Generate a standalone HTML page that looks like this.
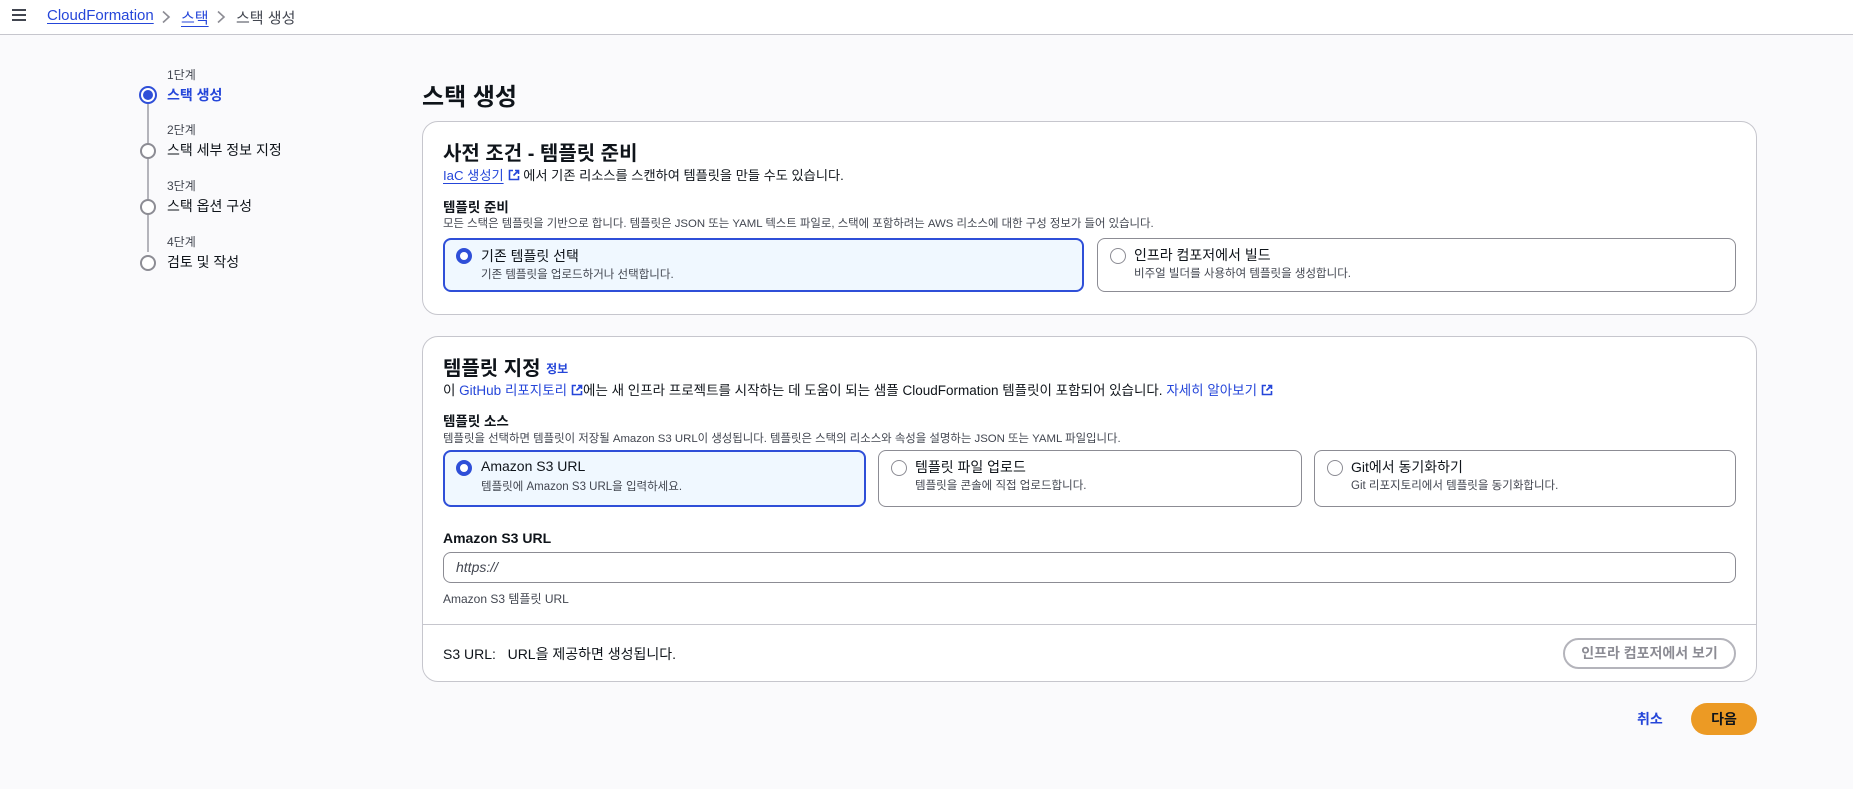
<!DOCTYPE html>
<html><head><meta charset="utf-8"><style>
*{box-sizing:border-box;margin:0;padding:0}
body{width:1853px;height:789px;background:#fafafc;font-family:"Liberation Sans","Noto Sans CJK KR",sans-serif;color:#0f141a;position:relative;overflow:hidden}
.a{position:absolute;white-space:nowrap}
.hdr{position:absolute;left:0;top:0;width:1853px;height:35px;background:#fff;border-bottom:1px solid #c6c6cd}
.blue{color:#2546d9}
.ul{text-decoration:underline;text-underline-offset:3px}
.step-s{font-size:12px;color:#424650}
.step-l{font-size:14px;color:#0f141a}
.circ{position:absolute;width:16px;height:16px;border:2px solid #8c8c94;border-radius:50%;background:#fff}
.panel{position:absolute;left:422px;width:1335px;background:#fff;border:1px solid #c6c6cd;border-radius:16px}
.card{position:absolute;border:1px solid #8c8c94;border-radius:8px;background:#fff}
.card.sel{border:2px solid #2f4fd8;background:#f0f8ff}
.rad{position:absolute;left:12px;top:9px;width:16px;height:16px;border-radius:50%;border:1.5px solid #8c8c94;background:#fff}
.sel .rad{border:4px solid #2f4fd8;left:11px;top:8px}
.ct{position:absolute;left:36px;top:6px;font-size:14px}
.cd{position:absolute;left:36px;top:26px;font-size:11.5px;color:#424650}
.ext{display:inline-block;width:12px;height:12px;vertical-align:-1px;margin-left:4px}
</style></head><body>
<div class="hdr"></div>
<div class="a" style="left:12px;top:9px;width:14px;height:2px;background:#424650;box-shadow:0 5px 0 #424650,0 10px 0 #424650"></div>
<div class="a blue ul" style="left:47px;top:7px;font-size:15px">CloudFormation</div>
<svg class="a" style="left:161px;top:10px" width="10" height="14" viewBox="0 0 10 14"><path d="M2 1.5l6 5.5-6 5.5" fill="none" stroke="#8c8c94" stroke-width="1.6"/></svg>
<div class="a blue ul" style="left:181px;top:7px;font-size:15px">스택</div>
<svg class="a" style="left:216px;top:10px" width="10" height="14" viewBox="0 0 10 14"><path d="M2 1.5l6 5.5-6 5.5" fill="none" stroke="#8c8c94" stroke-width="1.6"/></svg>
<div class="a" style="left:236px;top:7px;font-size:15px;color:#424650">스택 생성</div>

<div class="a" style="left:147px;top:104px;width:2px;height:148px;background:#b4b4bb"></div>
<div class="a step-s" style="left:167px;top:66px">1단계</div>
<div class="circ" style="left:139px;top:86px;width:18px;height:18px;border-color:#2f4fd8;background:#fff"></div>
<div class="a" style="left:143px;top:90px;width:10px;height:10px;border-radius:50%;background:#2f4fd8"></div>
<div class="a step-l" style="left:167px;top:85px;color:#2546d9;font-weight:bold">스택 생성</div>
<div class="a step-s" style="left:167px;top:121px">2단계</div>
<div class="circ" style="left:140px;top:143px"></div>
<div class="a step-l" style="left:167px;top:140px">스택 세부 정보 지정</div>
<div class="a step-s" style="left:167px;top:177px">3단계</div>
<div class="circ" style="left:140px;top:199px"></div>
<div class="a step-l" style="left:167px;top:196px">스택 옵션 구성</div>
<div class="a step-s" style="left:167px;top:233px">4단계</div>
<div class="circ" style="left:140px;top:255px"></div>
<div class="a step-l" style="left:167px;top:252px">검토 및 작성</div>

<div class="a" style="left:422px;top:77px;font-size:24px;font-weight:bold">스택 생성</div>

<div class="panel" style="top:121px;height:194px"></div>
<div class="a" style="left:443px;top:137px;font-size:20px;font-weight:bold">사전 조건 - 템플릿 준비</div>
<div class="a" style="left:443px;top:165px;font-size:13.2px"><span class="blue ul">IaC 생성기</span><svg class="ext" viewBox="0 0 12 12"><path d="M5 1.5H1.5v9h9V7M7 1.5h3.5V5M10.5 1.5L5.5 6.5" fill="none" stroke="#2546d9" stroke-width="1.6"/></svg> 에서 기존 리소스를 스캔하여 템플릿을 만들 수도 있습니다.</div>
<div class="a" style="left:443px;top:196px;font-size:13.5px;font-weight:bold">템플릿 준비</div>
<div class="a" style="left:443px;top:215px;font-size:11.4px;color:#424650">모든 스택은 템플릿을 기반으로 합니다. 템플릿은 JSON 또는 YAML 텍스트 파일로, 스택에 포함하려는 AWS 리소스에 대한 구성 정보가 들어 있습니다.</div>
<div class="card sel" style="left:443px;top:238px;width:641px;height:54px"><div class="rad"></div><div class="ct">기존 템플릿 선택</div><div class="cd">기존 템플릿을 업로드하거나 선택합니다.</div></div>
<div class="card" style="left:1097px;top:238px;width:639px;height:54px"><div class="rad"></div><div class="ct">인프라 컴포저에서 빌드</div><div class="cd">비주얼 빌더를 사용하여 템플릿을 생성합니다.</div></div>

<div class="panel" style="top:336px;height:346px"></div>
<div class="a" style="left:443px;top:352px;font-size:20px;font-weight:bold">템플릿 지정 <span class="blue" style="font-size:12px;font-weight:bold;vertical-align:2px">정보</span></div>
<div class="a" style="left:443px;top:379px;font-size:13.5px">이 <span class="blue">GitHub 리포지토리</span><svg class="ext" viewBox="0 0 12 12"><path d="M5 1.5H1.5v9h9V7M7 1.5h3.5V5M10.5 1.5L5.5 6.5" fill="none" stroke="#2546d9" stroke-width="1.6"/></svg>에는 새 인프라 프로젝트를 시작하는 데 도움이 되는 샘플 CloudFormation 템플릿이 포함되어 있습니다. <span class="blue">자세히 알아보기</span><svg class="ext" viewBox="0 0 12 12"><path d="M5 1.5H1.5v9h9V7M7 1.5h3.5V5M10.5 1.5L5.5 6.5" fill="none" stroke="#2546d9" stroke-width="1.6"/></svg></div>
<div class="a" style="left:443px;top:410px;font-size:13.5px;font-weight:bold">템플릿 소스</div>
<div class="a" style="left:443px;top:430px;font-size:11.4px;color:#424650">템플릿을 선택하면 템플릿이 저장될 Amazon S3 URL이 생성됩니다. 템플릿은 스택의 리소스와 속성을 설명하는 JSON 또는 YAML 파일입니다.</div>
<div class="card sel" style="left:443px;top:450px;width:423px;height:57px"><div class="rad"></div><div class="ct">Amazon S3 URL</div><div class="cd">템플릿에 Amazon S3 URL을 입력하세요.</div></div>
<div class="card" style="left:878px;top:450px;width:424px;height:57px"><div class="rad"></div><div class="ct">템플릿 파일 업로드</div><div class="cd">템플릿을 콘솔에 직접 업로드합니다.</div></div>
<div class="card" style="left:1314px;top:450px;width:422px;height:57px"><div class="rad"></div><div class="ct">Git에서 동기화하기</div><div class="cd">Git 리포지토리에서 템플릿을 동기화합니다.</div></div>
<div class="a" style="left:443px;top:530px;font-size:14px;font-weight:bold">Amazon S3 URL</div>
<div class="a" style="left:443px;top:552px;width:1293px;height:31px;border:1px solid #8c8c94;border-radius:8px;background:#fff"></div>
<div class="a" style="left:456px;top:559px;font-size:14px;font-style:italic;color:#424650">https://</div>
<div class="a" style="left:443px;top:590px;font-size:12px;color:#424650">Amazon S3 템플릿 URL</div>
<div class="a" style="left:423px;top:624px;width:1333px;height:1px;background:#c6c6cd"></div>
<div class="a" style="left:443px;top:644px;font-size:14px">S3 URL: &nbsp; URL을 제공하면 생성됩니다.</div>
<div class="a" style="left:1563px;top:638px;width:173px;height:31px;border:2px solid #b4b4bb;border-radius:16px;background:#fff;font-size:14px;font-weight:bold;color:#8c8c94;text-align:center;line-height:27px">인프라 컴포저에서 보기</div>

<div class="a blue" style="left:1637px;top:709px;font-size:14px;font-weight:bold">취소</div>
<div class="a" style="left:1691px;top:703px;width:66px;height:32px;border-radius:16px;background:#ec9a24;font-size:14px;font-weight:bold;text-align:center;line-height:32px;color:#0f141a">다음</div>
</body></html>
